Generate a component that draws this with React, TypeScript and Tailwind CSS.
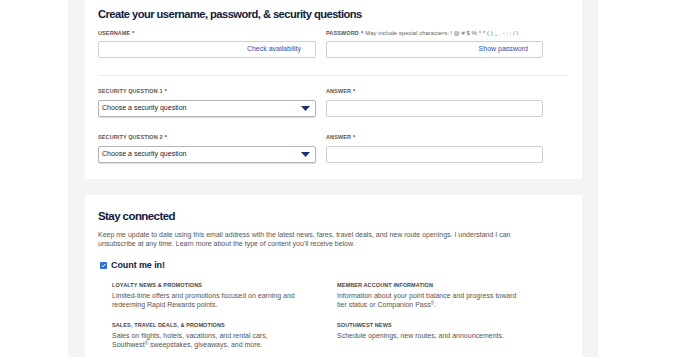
import React from 'react'

const font = { fontFamily: '"Liberation Sans", Arial, sans-serif' }

function Label({ text, note }: { text: string; note?: string }) {
  return (
    <div className="h-[9px] flex items-center text-[5.5px] font-bold uppercase text-[#555] tracking-[0.02em] whitespace-nowrap">
      {text}
      <span className="ml-[2px] text-[#d10000]">*</span>
      {note && <span className="ml-[2px] text-[6px] font-normal normal-case tracking-normal text-[#666]">{note}</span>}
    </div>
  )
}

function TextInput({ action }: { action?: string }) {
  return (
    <div className="h-[17px] border border-[#cfcfcf] rounded-[2px] bg-white flex items-center justify-end pr-[14px]">
      {action && <span className="text-[7px] text-[#304cb2]">{action}</span>}
    </div>
  )
}

function Select() {
  return (
    <div className="h-[17px] border border-[#b5b5b5] rounded-[2px] bg-white shadow-[0_1px_1px_rgba(0,0,0,0.15)] flex items-center justify-between pl-[3px] pr-[5px]">
      <span className="text-[7px] text-[#222]">Choose a security question</span>
      <svg width="9" height="5" viewBox="0 0 9 5">
        <path d="M0 0h9L4.5 5z" fill="#1f2f7a" />
      </svg>
    </div>
  )
}

function Topic({ title, children }: { title: string; children: React.ReactNode }) {
  return (
    <div>
      <div className="text-[5.5px] font-bold text-[#444] uppercase tracking-[0.02em] leading-[8px]">{title}</div>
      <div className="mt-[2px] text-[7px] leading-[9.5px] text-[#555]">{children}</div>
    </div>
  )
}

export default function App() {
  return (
    <div className="min-h-screen bg-white" style={font}>
      <div className="ml-[68px] w-[530px] min-h-[357px] bg-[#f3f4f6] pl-[17px] pr-[16px]">
        <div className="bg-white pl-[13px] pr-[14px] pt-[5px] pb-[16px]">
          <h1 className="text-[11.2px] font-bold text-[#111b40] tracking-[-0.05em] leading-[18px]">
            Create your username, password, &amp; security questions
          </h1>
          <div className="mt-[6px] grid grid-cols-[218px_217px] gap-x-[10px]">
            <div>
              <Label text="Username" />
              <div className="mt-[3px]"><TextInput action="Check availability" /></div>
            </div>
            <div>
              <Label text="Password" note="May include special characters: ! @ # $ % ^ * ( ) _ . - ; : / \" />
              <div className="mt-[3px]"><TextInput action="Show password" /></div>
            </div>
          </div>
          <div className="mt-[17px] h-px bg-[#ececec]" />
          <div className="mt-[11px] grid grid-cols-[218px_217px] gap-x-[10px] gap-y-[16px]">
            <div>
              <Label text="Security Question 1" />
              <div className="mt-[4px]"><Select /></div>
            </div>
            <div>
              <Label text="Answer" />
              <div className="mt-[4px]"><TextInput /></div>
            </div>
            <div>
              <Label text="Security Question 2" />
              <div className="mt-[4px]"><Select /></div>
            </div>
            <div>
              <Label text="Answer" />
              <div className="mt-[4px]"><TextInput /></div>
            </div>
          </div>
        </div>

        <div className="mt-[16px] bg-white pl-[13px] pr-[14px] pt-[12px] pb-[20px]">
          <h2 className="text-[11.5px] font-bold text-[#111b40] tracking-[-0.05em] leading-[18px]">Stay connected</h2>
          <p className="mt-[5px] text-[7px] leading-[9px] text-[#555] w-[425px]">
            Keep me update to date using this email address with the latest news, fares, travel deals, and new route openings. I understand I can
            unsubscribe at any time. Learn more about the type of content you&apos;ll receive below.
          </p>
          <div className="mt-[11px] flex items-center gap-[4px] pl-[2px]">
            <span className="w-[7px] h-[7px] rounded-[1px] bg-[#2f6fdf] flex items-center justify-center">
              <svg width="5" height="5" viewBox="0 0 5 5">
                <path d="M0.8 2.6l1.2 1.2L4.2 1" stroke="#fff" strokeWidth="0.9" fill="none" />
              </svg>
            </span>
            <span className="text-[9px] font-bold text-[#111b40] tracking-[-0.01em]">Count me in!</span>
          </div>
          <div className="mt-[8px] pl-[14px] grid grid-cols-[225px_200px] gap-y-[11px]">
            <Topic title="Loyalty News & Promotions">
              Limited-time offers and promotions focused on earning and<br />redeeming Rapid Rewards points.
            </Topic>
            <Topic title="Member Account Information">
              Information about your point balance and progress toward<br />tier status or Companion Pass<sup className="text-[4.5px]">®</sup>.
            </Topic>
            <Topic title="Sales, Travel Deals, & Promotions">
              Sales on flights, hotels, vacations, and rental cars,<br />Southwest<sup className="text-[4.5px]">®</sup> sweepstakes, giveaways, and more.
            </Topic>
            <Topic title="Southwest News">Schedule openings, new routes, and announcements.</Topic>
          </div>
        </div>
      </div>
    </div>
  )
}
